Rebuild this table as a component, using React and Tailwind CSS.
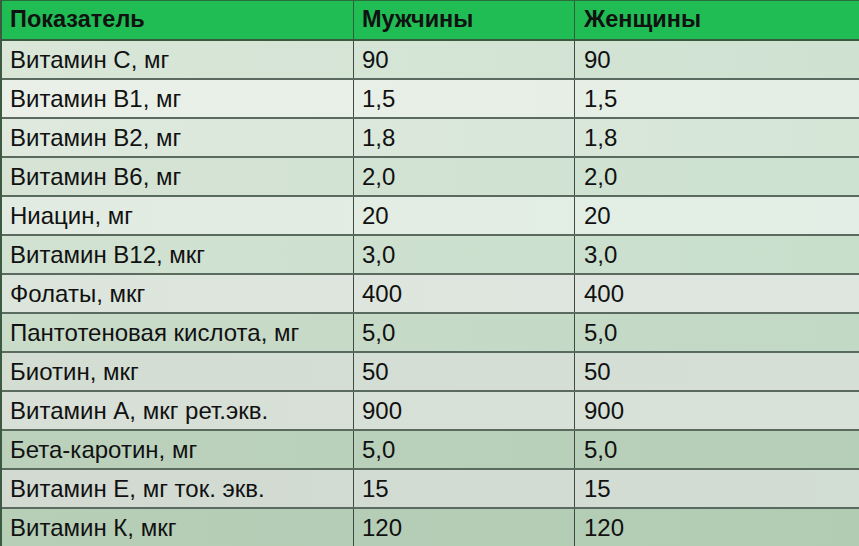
const rows = [
  ['Витамин С, мг', '90', '90'],
  ['Витамин В1, мг', '1,5', '1,5'],
  ['Витамин В2, мг', '1,8', '1,8'],
  ['Витамин В6, мг', '2,0', '2,0'],
  ['Ниацин, мг', '20', '20'],
  ['Витамин В12, мкг', '3,0', '3,0'],
  ['Фолаты, мкг', '400', '400'],
  ['Пантотеновая кислота, мг', '5,0', '5,0'],
  ['Биотин, мкг', '50', '50'],
  ['Витамин А, мкг рет.экв.', '900', '900'],
  ['Бета-каротин, мг', '5,0', '5,0'],
  ['Витамин Е, мг ток. экв.', '15', '15'],
  ['Витамин К, мкг', '120', '120'],
]

const rowBg = [
  'bg-gradient-to-r from-[#d9e6d8] to-[#cfe2d2]',
  'bg-gradient-to-r from-[#eaf0e8] to-[#e4eee5]',
  'bg-gradient-to-r from-[#dfe9de] to-[#d5e6d7]',
  'bg-gradient-to-r from-[#d6e3d5] to-[#cde2d0]',
  'bg-gradient-to-r from-[#e2ebe1] to-[#e3efe6]',
  'bg-gradient-to-r from-[#d2e2d2] to-[#c8dfcc]',
  'bg-gradient-to-r from-[#dce5dc] to-[#dfe6e0]',
  'bg-gradient-to-r from-[#c9dbc9] to-[#c2d9c5]',
  'bg-gradient-to-r from-[#d3ddd2] to-[#d5dfd6]',
  'bg-gradient-to-r from-[#d7dfd6] to-[#d8e2d8]',
  'bg-gradient-to-r from-[#bcd1bc] to-[#b6cfb8]',
  'bg-gradient-to-r from-[#d2dad1] to-[#d2ddd3]',
  'bg-gradient-to-r from-[#b7ceb7] to-[#b2ccb4]',
]

const cols = 'grid grid-cols-[352px_221px_1fr]'

export default function App() {
  return (
    <div className="w-[859px] h-[546px] overflow-hidden bg-[#cfdccf] text-[#111] font-['Liberation_Sans',Arial,sans-serif]">
      <div className="border-l-2 border-l-[#3c5a42]">
        <div className={`${cols} h-[41px] bg-[#1fbd54] border-t border-t-[#2c6b3a] border-b-2 border-b-[#3a5a40] text-[23.5px] font-bold`}>
          <div className="flex items-center pl-[8px] border-r border-r-[#2f5f3a]">Показатель</div>
          <div className="flex items-center pl-[8px] border-r border-r-[#2f5f3a]">Мужчины</div>
          <div className="flex items-center pl-[9px]">Женщины</div>
        </div>
        {rows.map((r, i) => (
          <div key={i} className={`${cols} h-[39px] border-b-2 border-b-[#5b6a5e] text-[24px] ${rowBg[i]}`}>
            <div className="flex items-center pl-[8px] border-r border-r-[#3f4a42]">{r[0]}</div>
            <div className="flex items-center pl-[8px] border-r border-r-[#3f4a42]">{r[1]}</div>
            <div className="flex items-center pl-[9px]">{r[2]}</div>
          </div>
        ))}
      </div>
    </div>
  )
}
